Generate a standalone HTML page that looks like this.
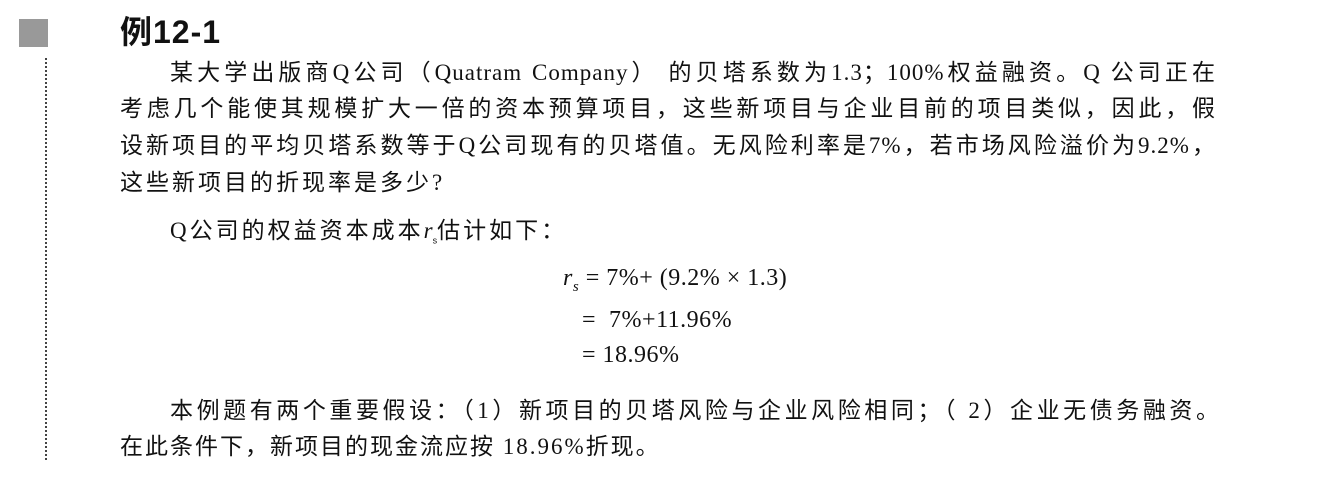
<!DOCTYPE html>
<html><head><meta charset="utf-8"><style>
html,body{margin:0;padding:0;background:#fff;width:1317px;height:479px;overflow:hidden;position:relative}
body{font-family:"Liberation Serif","Noto Sans CJK SC",serif;color:#111}
.sq{position:absolute;left:19px;top:19px;width:29px;height:28px;background:#999}
.dot{position:absolute;left:45px;top:58px;height:402px;border-left:2px dotted #444}
.t{position:absolute;left:120px;top:7px;font:bold 32px "Liberation Sans","Noto Sans CJK SC",sans-serif;letter-spacing:1px}
.l{position:absolute;font-size:23px;line-height:30px;white-space:nowrap;text-align:justify;text-align-last:justify;letter-spacing:1px}
.f{position:absolute;font-size:24px;line-height:30px;white-space:nowrap;font-family:"Liberation Serif",serif;letter-spacing:0.5px}
</style></head><body>
<div class="sq"></div><div class="dot"></div>
<div class="t">例12-1</div>
<div class="l" style="left:170px;top:58px;width:1046px">某大学出版商Q公司（Quatram Company） 的贝塔系数为1.3；100%权益融资。Q 公司正在</div>
<div class="l" style="left:120px;top:94px;width:1096px">考虑几个能使其规模扩大一倍的资本预算项目，这些新项目与企业目前的项目类似，因此，假</div>
<div class="l" style="left:120px;top:131px;width:1096px">设新项目的平均贝塔系数等于Q公司现有的贝塔值。无风险利率是7%，若市场风险溢价为9.2%，</div>
<div class="l" style="left:120px;top:168px;text-align-last:auto;letter-spacing:3px">这些新项目的折现率是多少?</div>
<div class="l" style="left:170px;top:216px;text-align-last:auto;letter-spacing:3px">Q公司的权益资本成本<i style="font-family:'Liberation Serif';letter-spacing:0">r</i><sub style="font-size:9px;letter-spacing:0;font-family:'Liberation Sans'">s</sub>估计如下：</div>
<div class="f" style="left:563px;top:263px"><i>r<sub style="font-size:15px">s</sub></i> = 7%+ (9.2% × 1.3)</div>
<div class="f" style="left:582px;top:305px">= &nbsp;7%+11.96%</div>
<div class="f" style="left:582px;top:340px">= 18.96%</div>
<div class="l" style="left:170px;top:396px;width:1050px">本例题有两个重要假设：（1）新项目的贝塔风险与企业风险相同；（ 2）企业无债务融资。</div>
<div class="l" style="left:120px;top:432px;text-align-last:auto;letter-spacing:2px">在此条件下，新项目的现金流应按 18.96%折现。</div>
</body></html>
